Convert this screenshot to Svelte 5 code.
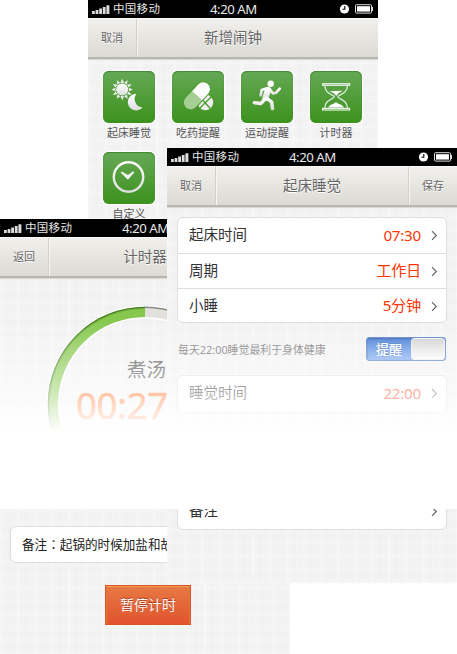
<script>
  const tiles = [
    { icon: 'sleep', label: '起床睡觉' },
    { icon: 'pill', label: '吃药提醒' },
    { icon: 'run', label: '运动提醒' },
    { icon: 'glass', label: '计时器' },
    { icon: 'clock', label: '自定义' }
  ];
  const rows = [
    { name: '起床时间', value: '07:30' },
    { name: '周期', value: '工作日' },
    { name: '小睡', value: '5分钟' }
  ];
  const rays = Array.from({ length: 12 }, (_, i) => i * 30);
</script>

{#snippet status()}
  <div class="status">
    <svg class="signal" width="18" height="9" viewBox="0 0 18 9" fill="#ddd">
      <rect x="0" y="6" width="2.8" height="3" /><rect x="3.6" y="5" width="2.8" height="4" />
      <rect x="7.2" y="3.5" width="2.8" height="5.5" /><rect x="10.8" y="2" width="2.8" height="7" />
      <rect x="14.4" y="0.3" width="3" height="8.7" />
    </svg>
    <span class="carrier">中国移动</span>
    <span class="time">4:20 AM</span>
    <svg class="power" width="34" height="12" viewBox="0 0 34 12">
      <circle cx="5.5" cy="6" r="4.6" fill="#fff" />
      <path d="M5.8 3v3.2H3.5" fill="none" stroke="#000" stroke-width="1.1" />
      <rect x="16.5" y="1.7" width="16" height="8.4" rx="1" fill="none" stroke="#ddd" />
      <rect x="18" y="3.2" width="13" height="5.4" fill="#fff" />
      <rect x="32.8" y="4" width="1.2" height="4" fill="#ddd" />
    </svg>
  </div>
{/snippet}

{#snippet header(back, title, action)}
  <div class="header">
    <span class="side left">{back}</span>
    <span class="title">{title}</span>
    {#if action}<span class="side right">{action}</span>{:else}<span class="spacer"></span>{/if}
  </div>
{/snippet}

{#snippet chevron()}
  <svg class="chev" width="7" height="11" viewBox="0 0 7 11"><path d="M1 1.2l4.3 4.3L1 9.8" fill="none" stroke="#666" stroke-width="1.2" /></svg>
{/snippet}

<div class="stage">
  <section class="phone add">
    {@render status()}
    {@render header('取消', '新增闹钟', '')}
    <div class="grid">
      {#each tiles as t}
        <div class="item">
          <div class="tile">
            <svg width="52" height="52" viewBox="0 0 52 52">
              <defs>
                <linearGradient id="g-{t.icon}" x1="0" y1="0" x2="0" y2="1"><stop offset="0" stop-color="#fff" /><stop offset="1" stop-color="#dedede" /></linearGradient>
              </defs>
              {#if t.icon === 'sleep'}
                <g transform="translate(19.2 18.5)" fill="#f2f2f2">
                  {#each rays as r}<path d="M-1.8 -6.4L0 -10.8L1.8 -6.4z" transform="rotate({r})" />{/each}
                  <circle r="6.7" fill="#55a03f" />
                  <circle r="6" fill="url(#g-sleep)" />
                </g>
                <path d="M33.5 22.8a8.3 8.3 0 1 0 6 13.6a8.4 8.4 0 0 1-6-13.6z" fill="url(#g-sleep)" />
              {:else if t.icon === 'pill'}
                <circle cx="33.4" cy="31.4" r="7.8" fill="#eee" />
                <path d="M26.5 38.5L40 25M31 29.5l7.3 8" stroke="#4c9c31" stroke-width="1.4" />
                <g transform="rotate(43 24.5 24.5)">
                  <rect x="17.2" y="7.5" width="15.6" height="34" rx="7.8" fill="#4d9c32" />
                  <path d="M18.2 24.4v-9.2a6.8 6.8 0 0 1 13.6 0v9.2z" fill="#fcfcfc" />
                  <path d="M18.2 24.4v9.2a6.8 6.8 0 0 0 13.6 0v-9.2z" fill="#a5cf95" />
                </g>
              {:else if t.icon === 'run'}
                <circle cx="29.7" cy="12.8" r="3.2" fill="#fff" />
                <g fill="none" stroke="url(#g-run)" stroke-linecap="round" stroke-linejoin="round">
                  <path d="M27 19l-2.6 8" stroke-width="6.2" />
                  <path d="M26 17.4l-5.3 1.6-1 5.2M29 18.5l3 4 3.2-.8 3.6-4" stroke-width="2.7" />
                  <path d="M24 28l-4.2 4.6-6.5-.9M25.5 27l5.2 4.2.8 6.3" stroke-width="3.5" />
                </g>
              {:else if t.icon === 'glass'}
                <g fill="none" stroke="#e9f2e5" stroke-width="1.2">
                  <rect x="12.6" y="12.7" width="27" height="1.6" /><rect x="12.6" y="37.4" width="27" height="1.6" />
                  <path d="M14.8 14.6c0 6 4.2 7.7 8.7 10.2q1.6 1 0 2c-4.5 2.5-8.7 4.2-8.7 10.2M37.4 14.6c0 6-4.2 7.7-8.7 10.2q-1.6 1 0 2c4.5 2.5 8.7 4.2 8.7 10.2" />
                </g>
                <path d="M19.5 20.2l13-.5q-4.5 2-6.4 5.3q-1.7-3.2-6.6-4.8zM18 36.4c2.4-3.3 4.3-2.6 8-5.2c3.7 2.6 5.8 2 8.2 5.2z" fill="#fff" />
              {:else}
                <circle cx="25.5" cy="25" r="14.7" fill="none" stroke="url(#g-clock)" stroke-width="2.4" />
                <path d="M17.6 20.6l1-1.2 6.3 3.7 5.3-3.8 1 1.2-6.3 7.2z" fill="#f4f4f4" />
              {/if}
            </svg>
          </div>
          <span>{t.label}</span>
        </div>
      {/each}
    </div>
  </section>

  <section class="phone timer">
    {@render status()}
    {@render header('返回', '计时器', '')}
    <div class="dial">
      <svg class="ring" width="196" height="196" viewBox="0 0 196 196">
        <circle cx="98" cy="98" r="92" fill="none" stroke="#fff" stroke-width="13" />
        <circle cx="98" cy="98" r="92" fill="none" stroke="#e3e1dc" stroke-width="10" />
        <path d="M98 6A92 92 0 0 0 98 190" fill="none" stroke="#86c84d" stroke-width="10" />
        <path d="M98 1.3A96.7 96.7 0 0 0 98 194.7" fill="none" stroke="#46821f" stroke-width="1.3" />
        <path d="M98 2.5A95.5 95.5 0 0 0 98 193.5" fill="none" stroke="#5d9a34" stroke-opacity=".5" />
        <path d="M98 1.3A96.7 96.7 0 0 1 98 194.7" fill="none" stroke="#8b8985" stroke-width="1.4" />
      </svg>
      <div class="task">煮汤</div>
      <div class="left-time">00:27</div>
    </div>
    <div class="card note">备注<span>：</span>起锅的时候加盐和故</div>
    <div class="pause">暂停计时</div>
  </section>

  <section class="phone wake">
    {@render status()}
    {@render header('取消', '起床睡觉', '保存')}
    <div class="card list">
      {#each rows as r}
        <div class="row"><span>{r.name}</span><b>{r.value}</b>{@render chevron()}</div>
      {/each}
    </div>
    <div class="remind">
      <span>每天22:00睡觉最利于身体健康</span>
      <div class="switch"><i>提醒</i><div class="knob"></div></div>
    </div>
    <div class="card sleep"><div class="row"><span>睡觉时间</span><b>22:00</b>{@render chevron()}</div></div>
    <div class="card memo"><div class="row"><span>备注</span><b></b>{@render chevron()}</div></div>
  </section>

  <div class="fade"></div>
</div>

<style>
  .stage { position: relative; width: 457px; height: 654px; overflow: hidden; background: #fff; font-family: "Noto Sans", "Noto Sans CJK SC", sans-serif; color: #333; }
  .stage * { box-sizing: border-box; }
  .phone {
    position: absolute; width: 290px; overflow: hidden; display: flex; flex-direction: column; white-space: nowrap;
    background:
      repeating-linear-gradient(90deg, rgba(255,255,255,.25) 0 2px, transparent 3px 7px, rgba(0,0,0,.006) 8px 9px, transparent 10px 17px),
      repeating-linear-gradient(0deg, rgba(255,255,255,.25) 0 1px, transparent 2px 6px, rgba(0,0,0,.006) 7px 8px, transparent 9px 13px),
      #f3f3f3;
  }
  .add { left: 88px; top: 0; height: 219px; }
  .timer { left: 0; top: 219px; height: 435px; }
  .wake { left: 167px; top: 148px; height: 435px; }
  .status { height: 18px; flex: none; background: #000; color: #e8e8e8; display: flex; align-items: center; padding: 0 2px 0 4px; }
  .signal { flex: none; }
  .carrier { width: 97px; padding-left: 3px; font: 11.5px/17px "Noto Sans CJK SC", sans-serif; letter-spacing: .3px; height: 18px; }
  .time { width: 132px; padding-left: 3px; font: 13.2px/18px "Noto Sans", sans-serif; letter-spacing: -.45px; }
  .power { flex: none; }
  .header { height: 41px; flex: none; display: flex; align-items: center; background: linear-gradient(#f1f0ec, #dcdad3); border-top: 1px solid #faf9f6; border-bottom: 2px solid #b9b7ad; box-shadow: 0 1px 1px #d9d9d6; color: #666; text-shadow: 0 1px 0 #fff; font-family: "Noto Sans CJK SC", sans-serif; }
  .side { width: 49px; height: 38px; line-height: 37px; text-align: center; font-size: 11px; }
  .side.left { border-right: 1px solid #d2d0c6; box-shadow: 1px 0 #f7f6f1; }
  .side.right { border-left: 1px solid #d2d0c6; box-shadow: inset 1px 0 #f7f6f1; }
  .spacer { width: 49px; }
  .title { flex: 1; text-align: center; font-size: 14.5px; line-height: 34px; height: 36px; }
  .grid { display: grid; grid-template-columns: repeat(4, 69px); grid-auto-rows: 81px; padding: 12px 0 0 6.5px; }
  .item { display: flex; flex-direction: column; align-items: center; font: 11px/16px "Noto Sans CJK SC", sans-serif; color: #555; gap: 1px; }
  .tile { width: 52px; height: 52px; border-radius: 6px; background: linear-gradient(#66a856, #3c921d); box-shadow: inset 0 1px 1px #428b33, inset 0 0 1px #3c8e22, 0 0 1px 1px #fff; }
  .tile svg, .ring { display: block; }
  .card { background: #fff; border: 1px solid #dedede; border-radius: 6px; margin-left: 10px; width: 270px; flex: none; }
  .row { display: flex; align-items: center; height: 35px; padding: 0 8px 0 11px; font-size: 15.2px; line-height: 20px; }
  .row + .row { border-top: 1px solid #dedede; }
  .row span { flex: 1; font: 14.5px/20px "Noto Sans CJK SC", sans-serif; padding-bottom: 3px; }
  .row b { font-weight: 400; color: #ff3502; letter-spacing: -.25px; padding-bottom: 2px; }
  .chev { margin-left: 10px; }
  .list { margin-top: 10px; height: 106px; }
  .remind { display: flex; justify-content: space-between; align-items: center; height: 24px; margin: 14px 11px 0 11px; flex: none; color: #777; font-size: 10.9px; }
  .switch { width: 80px; height: 24px; display: flex; border: 1px solid #5b82c8; border-radius: 3px; background: linear-gradient(#3f79d6, #84adf0); color: #fff; box-shadow: inset 0 1px 2px #2e5caa; }
  .switch i { flex: 1; text-align: center; font: 500 13px/22px "Noto Sans CJK SC", sans-serif; text-shadow: 0 -1px #4472bd; }
  .knob { width: 34px; height: 22px; border-radius: 3px; background: linear-gradient(#d0d0d0, #fafafa); border: 1px solid #eee; }
  .sleep { margin-top: 14px; height: 38px; }
  .memo { margin-top: 80px; height: 37px; }
  .dial { height: 266px; flex: none; position: relative; padding-top: 76px; }
  .ring { position: absolute; left: 47px; top: 28px; }
  .task { position: relative; padding-left: 127px; font: 19.5px/30px "Noto Sans CJK SC", sans-serif; color: #555; }
  .left-time { position: relative; width: 168px; overflow: hidden; padding-left: 76px; font: 36.5px/42px "Noto Sans", sans-serif; color: #ff7020; letter-spacing: -.3px; -webkit-text-stroke: .5px #ff7020; }
  .note { margin-top: -18px; height: 37px; padding-left: 11px; font: 12.6px/33px "Noto Sans CJK SC", sans-serif; color: #222; }
  .note span { font-family: "Noto Sans CJK TC", sans-serif; }
  .pause { width: 86px; height: 40px; margin: 22px 0 0 105px; flex: none; text-align: center; font: 14px/36px "Noto Sans CJK SC", sans-serif; color: #fff; border: 1px solid #db5424; background: linear-gradient(#e77a43, #e1532f); box-shadow: inset 0 1px #f09a52, inset 1px 0 #e9733c, inset -1px 0 #e9733c; text-shadow: 0 -1px #ad3c1d; }
  .fade { position: absolute; left: 0; top: 320px; width: 457px; height: 189px; background: linear-gradient(rgba(255,255,255,0), rgba(255,255,255,.25) 28px, rgba(255,255,255,.57) 70px, #fff 112px); pointer-events: none; }
</style>
